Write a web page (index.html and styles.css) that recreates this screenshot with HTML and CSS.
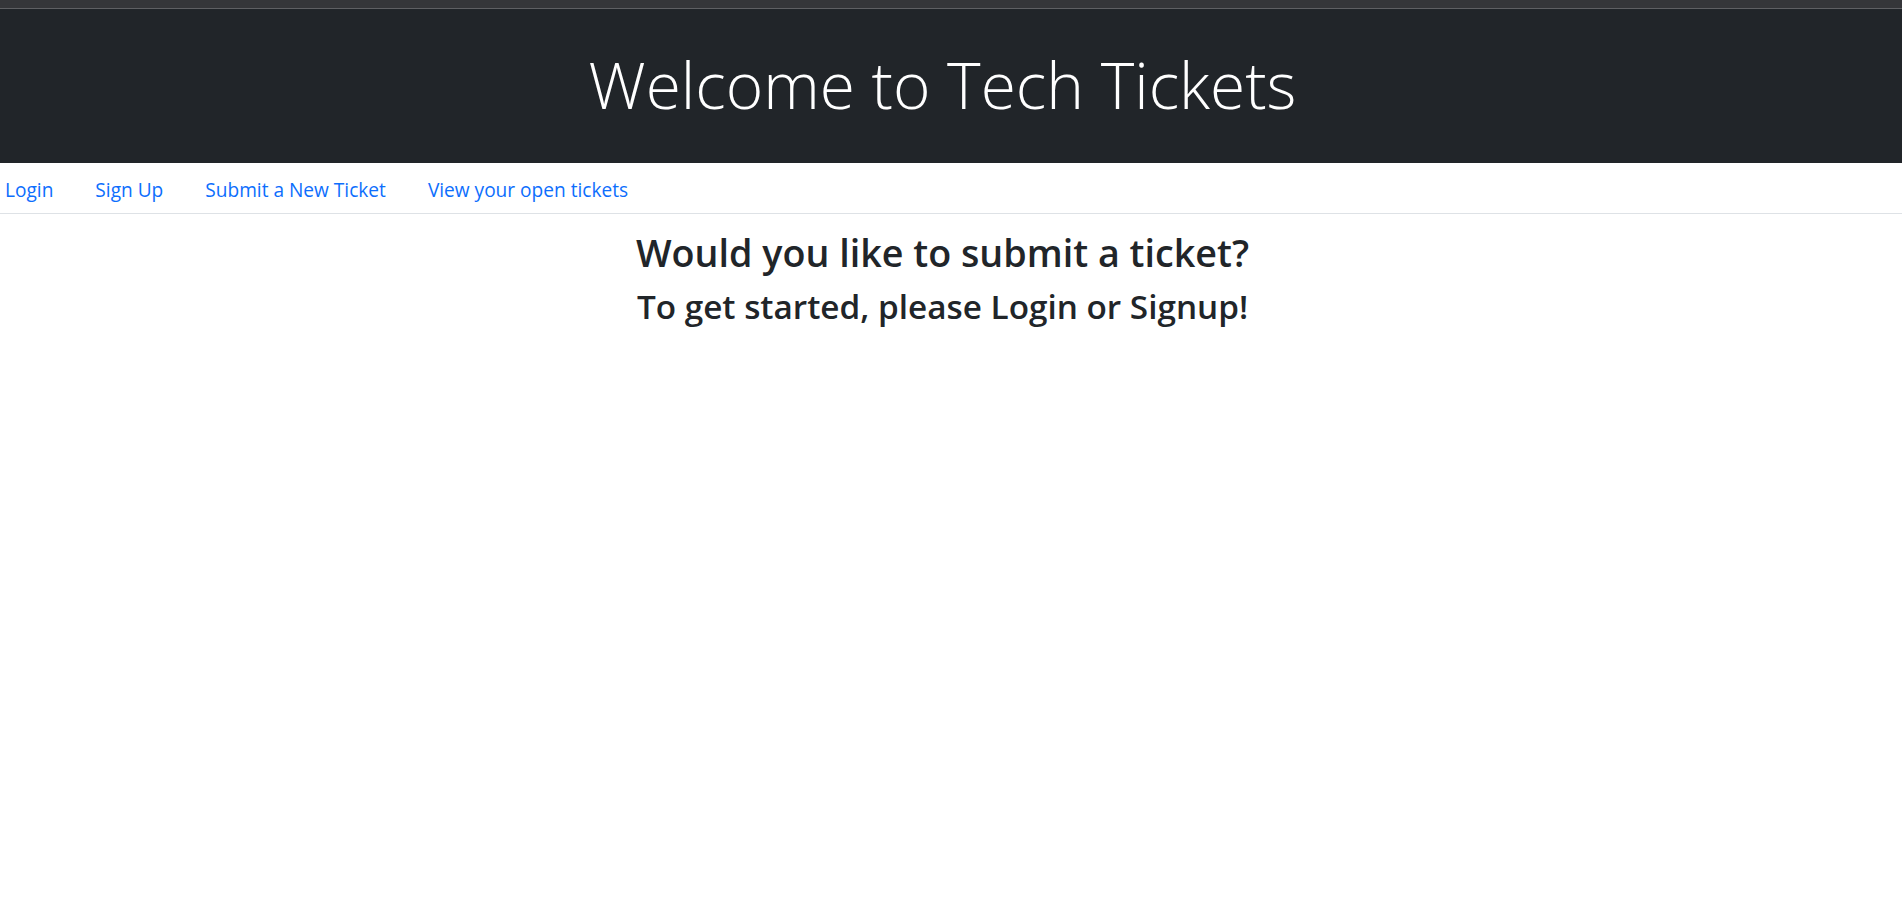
FILE: index.html
```html
<!DOCTYPE html>
<html lang="en">
<head>
<meta charset="utf-8">
<title>Tech Tickets</title>
<link rel="stylesheet" href="styles.css">
</head>
<body>
<div class="chrome"></div>
<header class="hero">
  <h1 class="hero-title">Welcome to Tech Tickets</h1>
</header>
<nav class="nav">
  <a class="nav-link first" href="#">Login</a>
  <a class="nav-link" href="#">Sign Up</a>
  <a class="nav-link" href="#">Submit a New Ticket</a>
  <a class="nav-link" href="#">View your open tickets</a>
</nav>
<main class="content">
  <h2 class="lead-title">Would you like to submit a ticket?</h2>
  <h3 class="lead-sub">To get started, please Login or Signup!</h3>
</main>
</body>
</html>
```
FILE: styles.css
```css
html, body {
  margin: 0;
  padding: 0;
  background: #fff;
}
body {
  font-family: "Open Sans", "Noto Sans", sans-serif;
  color: #212529;
}
.chrome {
  height: 8px;
  background: #353639;
  border-bottom: 1px solid #5f6063;
}
.hero {
  background: #212529;
  padding: 37px 17px 40px 0;
  text-align: center;
}
.hero-title {
  margin: 0;
  font-size: 64px;
  font-weight: 300;
  line-height: 77px;
  color: #fff;
}
.nav {
  display: flex;
  border-bottom: 1px solid #dee2e6;
}
.nav-link {
  padding: 12px 21px 8px;
  font-size: 19.1px;
  line-height: 30px;
  color: #0d6efd;
  text-decoration: none;
}
.nav-link.first {
  padding-left: 5px;
}
.content {
  padding: 16px 17px 0 0;
  text-align: center;
}
.lead-title {
  margin: 0 0 12px;
  font-size: 37.7px;
  font-weight: 600;
  line-height: 1.2;
}
.lead-sub {
  margin: 0;
  font-size: 33.3px;
  font-weight: 600;
  line-height: 1.2;
}
```
